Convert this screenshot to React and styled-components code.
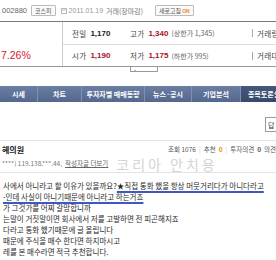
import React from 'react'
import styled, { createGlobalStyle } from 'styled-components'

const Global = createGlobalStyle`
body {
  margin: 0;
  background: #fff;
  font-family: "Noto Sans CJK KR", "DejaVu Sans", sans-serif;
  color: #333;
}
`

const Page = styled.div`
width: 276px;
height: 260px;
overflow: hidden;
`

const TopBar = styled.div`
display: flex;
align-items: center;
height: 21px;
padding-left: 2px;
border-bottom: 1px solid #7a7a7a;
font-size: 7px;
color: #777;
white-space: nowrap;
`

const Code = styled.span`
font-family: "Liberation Sans", sans-serif;
font-size: 7.5px;
color: #666;
margin-right: 4px;
`

const Badge = styled.span`
display: inline-flex;
align-items: center;
height: 9px;
padding: 0 3px;
border: 1px solid #bbb;
border-radius: 1px;
font-size: 6px;
color: #555;
background: #fafafa;
margin-right: 5px;
`

const DateText = styled.span`
font-family: "Liberation Sans", sans-serif;
font-size: 7px;
color: #999;
margin: 0 3px 0 2px;
`

const On = styled.b`
color: #f08c00;
margin-left: 1px;
font-family: "Liberation Sans", sans-serif;
font-size: 5px;
`

const Spacer = styled.span`
width: ${p => p.w}px;
`

const PriceBox = styled.div`
display: grid;
grid-template-columns: 63px 1fr;
border-bottom: 1px solid #999;
`

const Change = styled.div`
display: flex;
align-items: flex-end;
padding: 0 0 5px 1px;
border-right: 1px solid #ccc;
font-family: "Liberation Sans", sans-serif;
font-size: 10.5px;
color: #d0192b;
`

const Rows = styled.div`
display: flex;
flex-direction: column;
`

const Row = styled.div`
display: flex;
align-items: center;
height: ${p => p.h}px;
padding-left: 9px;
border-bottom: ${p => (p.last ? 'none' : '1px solid #ddd')};
white-space: nowrap;
font-size: 7.5px;
`

const Cell = styled.div`
display: flex;
align-items: center;
width: ${p => p.w}px;
`

const Label = styled.span`
color: #444;
margin-right: 4px;
letter-spacing: 0.3px;
`

const Value = styled.b`
font-family: "Liberation Sans", sans-serif;
font-size: 8px;
color: ${p => (p.up ? '#a8121e' : '#222')};
margin-right: 3px;
`

const Note = styled.span`
color: #666;
font-size: 7px;
`

const Sep = styled.span`
display: inline-block;
width: 1px;
height: 8px;
background: #aaa;
margin: 0 4px 0 0;
`

const Dropdown = styled.div`
margin-left: 130px;
width: 24px;
height: 4px;
border: 1px solid #999;
border-top: none;
font-size: 5px;
line-height: 3px;
padding-left: 2px;
color: #555;
`

const Nav = styled.div`
display: flex;
height: 16px;
margin-top: 14px;
background: linear-gradient(#6a7da3, #54678c);
white-space: nowrap;
`

const Tab = styled.div`
flex: 0 0 ${p => p.w}px;
display: flex;
align-items: center;
justify-content: center;
font-size: 7px;
font-weight: bold;
color: #fff;
background: ${p => (p.active ? 'linear-gradient(#45587d, #36486b)' : 'transparent')};
border-left: ${p => (p.first ? 'none' : '1px solid #7e91b4')};
`

const ActionArea = styled.div`
display: flex;
justify-content: flex-end;
align-items: flex-end;
height: 30px;
padding-bottom: 8px;
border-bottom: 1px solid #e2e2e2;
`

const SmallButton = styled.div`
width: 12px;
height: 13px;
border: 1px solid #999;
border-right: none;
font-size: 7px;
display: flex;
align-items: center;
padding-left: 2px;
color: #333;
margin-right: -4px;
`

const PostHead = styled.div`
border-bottom: 1px solid #e4e4e4;
padding: 2px 0 2px 2px;
`

const HeadRow = styled.div`
display: flex;
align-items: center;
justify-content: ${p => (p.spread ? 'space-between' : 'flex-start')};
height: ${p => p.h}px;
white-space: nowrap;
`

const Title = styled.b`
font-size: 8px;
color: #222;
`

const Stats = styled.div`
font-size: 6.5px;
color: #555;
display: flex;
align-items: center;
gap: 3px;
`

const Orange = styled.b`
color: #f08c00;
`

const Bar = styled.span`
color: #ccc;
`

const Meta = styled.div`
display: flex;
align-items: center;
font-size: 6.5px;
color: #777;
`

const Link = styled.span`
text-decoration: underline;
margin-left: 3px;
color: #666;
`

const Watermark = styled.span`
font-family: "Noto Sans CJK KR", serif;
font-size: 14px;
line-height: 14px;
color: #d4d4d4;
letter-spacing: 3px;
margin: 3px 0 0 8px;
`

const Body = styled.div`
padding: 6.5px 0 0 3px;
font-size: 7.5px;
line-height: 11px;
color: #2a2a2a;
white-space: nowrap;
`

const Marked = styled.span`
text-decoration: underline;
text-decoration-color: #3b58c4;
text-decoration-thickness: 2px;
text-underline-offset: 2px;
`

export default function App() {
  return (
    <Page>
      <Global />
      <TopBar>
        <Code>002880</Code>
        <Badge>코스피</Badge>
        <svg width="6" height="7" viewBox="0 0 6 7">
          <rect x="0.5" y="1.5" width="5" height="5" fill="none" stroke="#bbb" />
          <line x1="0.5" y1="3" x2="5.5" y2="3" stroke="#bbb" />
        </svg>
        <DateText>2011.01.19</DateText>
        <span>거래(장마감)</span>
        <Spacer w={12} />
        <Badge>새로고침<On>ON</On></Badge>
      </TopBar>
      <PriceBox>
        <Change>7.26%</Change>
        <Rows>
          <Row h={22}>
            <Cell w={58}><Label>전일</Label><Value>1,170</Value></Cell>
            <Cell w={122}><Label>고가</Label><Value up>1,340</Value><Note>(상한가 1,345)</Note></Cell>
            <Cell w={40}><Sep /><Label>거래량</Label></Cell>
          </Row>
          <Row h={21} last>
            <Cell w={58}><Label>시가</Label><Value up>1,190</Value></Cell>
            <Cell w={122}><Label>저가</Label><Value up>1,175</Value><Note>(하한가 995)</Note></Cell>
            <Cell w={40}><Sep /><Label>거래대금</Label></Cell>
          </Row>
        </Rows>
      </PriceBox>
      <Dropdown>⌄</Dropdown>
      <Nav>
        <Tab w={37} first>시세</Tab>
        <Tab w={43}>차트</Tab>
        <Tab w={62}>투자자별 매매동향</Tab>
        <Tab w={46}>뉴스·공시</Tab>
        <Tab w={48}>기업분석</Tab>
        <Tab w={46} active>종목토론실</Tab>
      </Nav>
      <ActionArea>
        <SmallButton>답</SmallButton>
      </ActionArea>
      <PostHead>
        <HeadRow h={12} spread>
          <Title>혜의원</Title>
          <Stats>
            조회 1076 <Bar>|</Bar> 추천 <Orange>0</Orange> <Bar>|</Bar> 투자의견 <b>0</b> 의견
          </Stats>
        </HeadRow>
        <HeadRow h={15}>
          <Meta>
            ****) 119.138.***.44,
            <Link>작성자글 더보기</Link>
          </Meta>
          <Watermark>코리아 안치용</Watermark>
        </HeadRow>
      </PostHead>
      <Body>
        <div>사에서 아니라고 할 이유가 있을까요?<Marked>★직접 통화 했을 항상 머뭇거리다가 아니다라고</Marked></div>
        <div><Marked>-인데 사실이 아니기때문에 아니라고 하는거죠</Marked></div>
        <div>가 그것가를 어찌 갈망합니까</div>
        <div>는말이 거짓말이면 회사에서 저를 고발하면 전 피곤해지죠</div>
        <div>다라고 통화 했기때문에 글 올립니다</div>
        <div>때문에 주식을 매수 한다면 하지마시고</div>
        <div>레를 본 매수라면 적극 추천합니다.</div>
      </Body>
    </Page>
  )
}
